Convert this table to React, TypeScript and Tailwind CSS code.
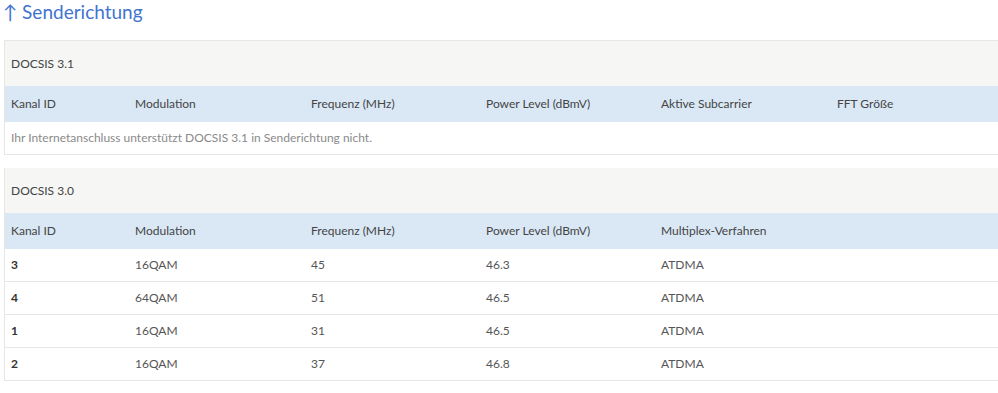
import React from "react";

const cols31 = ["Kanal ID", "Modulation", "Frequenz (MHz)", "Power Level (dBmV)", "Aktive Subcarrier", "FFT Größe"];
const cols30 = ["Kanal ID", "Modulation", "Frequenz (MHz)", "Power Level (dBmV)", "Multiplex-Verfahren"];

const rows30 = [
  ["3", "16QAM", "45", "46.3", "ATDMA"],
  ["4", "64QAM", "51", "46.5", "ATDMA"],
  ["1", "16QAM", "31", "46.5", "ATDMA"],
  ["2", "16QAM", "37", "46.8", "ATDMA"],
];

const widths = ["w-[124px]", "w-[176px]", "w-[175px]", "w-[175px]", "w-[176px]", "flex-1"];

const HeadRow = ({ cols }: { cols: string[] }) => (
  <div className="flex h-[36px] items-center bg-[#dae8f6] text-[#444]">
    {cols.map((c, i) => (
      <div key={i} className={`${widths[i]} shrink-0 pl-[6px]`}>
        {c}
      </div>
    ))}
  </div>
);

export default function App() {
  return (
    <div className="w-[998px] h-[393px] overflow-hidden bg-white font-['Lato',sans-serif] text-[12px]">
      <h2 className="pl-[3px] h-[40px] text-[19px] leading-[24px] text-[#3f74d0]">↑ Senderichtung</h2>

      <div className="ml-[4px] w-[1000px] border-t border-l border-b border-[#e6e6e6]">
        <div className="h-[45px] flex items-center pl-[6px] bg-[#f6f6f4] text-[#444]">DOCSIS 3.1</div>
        <HeadRow cols={cols31} />
        <div className="h-[32px] flex items-center pl-[6px] text-[#8a8a8a]">
          Ihr Internetanschluss unterstützt DOCSIS 3.1 in Senderichtung nicht.
        </div>
      </div>

      <div className="ml-[4px] mt-[13px] w-[1000px] border-l border-[#e6e6e6]">
        <div className="h-[45px] flex items-center pl-[6px] bg-[#f6f6f4] text-[#444]">DOCSIS 3.0</div>
        <HeadRow cols={cols30} />
        {rows30.map((r, ri) => (
          <div key={ri} className="flex h-[33px] items-center border-b border-[#e6e6e6] text-[#555]">
            {r.map((c, i) => (
              <div key={i} className={`${widths[i]} shrink-0 pl-[6px] ${i === 0 ? "font-bold text-[#333]" : ""}`}>
                {c}
              </div>
            ))}
          </div>
        ))}
      </div>
    </div>
  );
}
